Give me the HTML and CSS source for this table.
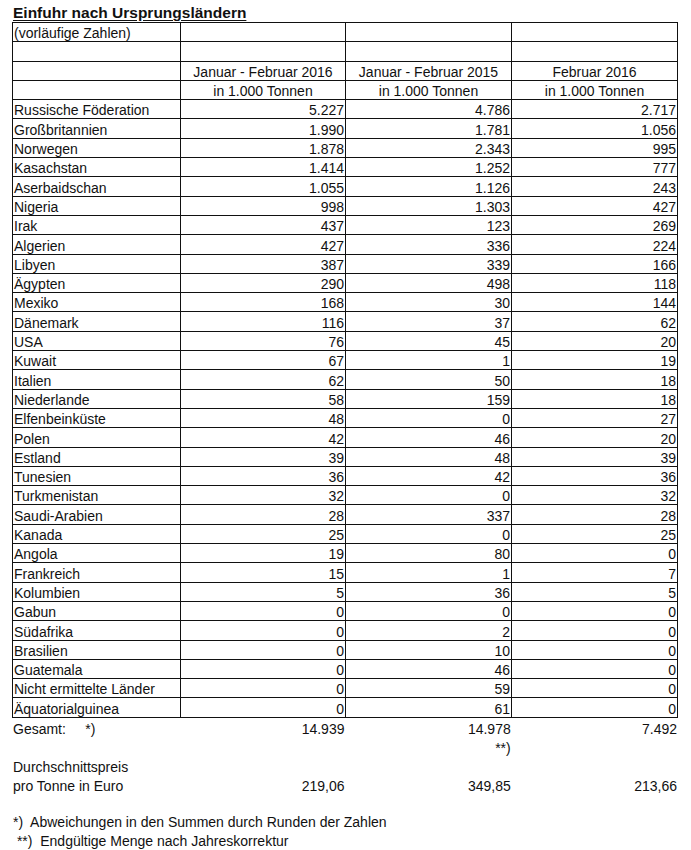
FILE: index.html
```html
<!DOCTYPE html>
<html lang="de">
<head>
    <meta charset="UTF-8">
    <title>Einfuhr nach Ursprungsländern</title>
    <link rel="stylesheet" href="styles.css">
</head>
<body>

<div class="sheet">
    <h1 class="title">Einfuhr nach Ursprungsländern</h1>

    <table class="grid">
        <colgroup>
            <col class="col-name">
            <col class="col-a">
            <col class="col-b">
            <col class="col-c">
        </colgroup>
        <tbody>
            <tr><td>(vorläufige Zahlen)</td><td></td><td></td><td></td></tr>
            <tr><td></td><td></td><td></td><td></td></tr>
            <tr class="head"><td></td><td>Januar - Februar 2016</td><td>Januar - Februar 2015</td><td>Februar 2016</td></tr>
            <tr class="head"><td></td><td>in 1.000 Tonnen</td><td>in 1.000 Tonnen</td><td>in 1.000 Tonnen</td></tr>
            <tr><td>Russische Föderation</td><td>5.227</td><td>4.786</td><td>2.717</td></tr>
            <tr><td>Großbritannien</td><td>1.990</td><td>1.781</td><td>1.056</td></tr>
            <tr><td>Norwegen</td><td>1.878</td><td>2.343</td><td>995</td></tr>
            <tr><td>Kasachstan</td><td>1.414</td><td>1.252</td><td>777</td></tr>
            <tr><td>Aserbaidschan</td><td>1.055</td><td>1.126</td><td>243</td></tr>
            <tr><td>Nigeria</td><td>998</td><td>1.303</td><td>427</td></tr>
            <tr><td>Irak</td><td>437</td><td>123</td><td>269</td></tr>
            <tr><td>Algerien</td><td>427</td><td>336</td><td>224</td></tr>
            <tr><td>Libyen</td><td>387</td><td>339</td><td>166</td></tr>
            <tr><td>Ägypten</td><td>290</td><td>498</td><td>118</td></tr>
            <tr><td>Mexiko</td><td>168</td><td>30</td><td>144</td></tr>
            <tr><td>Dänemark</td><td>116</td><td>37</td><td>62</td></tr>
            <tr><td>USA</td><td>76</td><td>45</td><td>20</td></tr>
            <tr><td>Kuwait</td><td>67</td><td>1</td><td>19</td></tr>
            <tr><td>Italien</td><td>62</td><td>50</td><td>18</td></tr>
            <tr><td>Niederlande</td><td>58</td><td>159</td><td>18</td></tr>
            <tr><td>Elfenbeinküste</td><td>48</td><td>0</td><td>27</td></tr>
            <tr><td>Polen</td><td>42</td><td>46</td><td>20</td></tr>
            <tr><td>Estland</td><td>39</td><td>48</td><td>39</td></tr>
            <tr><td>Tunesien</td><td>36</td><td>42</td><td>36</td></tr>
            <tr><td>Turkmenistan</td><td>32</td><td>0</td><td>32</td></tr>
            <tr><td>Saudi-Arabien</td><td>28</td><td>337</td><td>28</td></tr>
            <tr><td>Kanada</td><td>25</td><td>0</td><td>25</td></tr>
            <tr><td>Angola</td><td>19</td><td>80</td><td>0</td></tr>
            <tr><td>Frankreich</td><td>15</td><td>1</td><td>7</td></tr>
            <tr><td>Kolumbien</td><td>5</td><td>36</td><td>5</td></tr>
            <tr><td>Gabun</td><td>0</td><td>0</td><td>0</td></tr>
            <tr><td>Südafrika</td><td>0</td><td>2</td><td>0</td></tr>
            <tr><td>Brasilien</td><td>0</td><td>10</td><td>0</td></tr>
            <tr><td>Guatemala</td><td>0</td><td>46</td><td>0</td></tr>
            <tr><td>Nicht ermittelte Länder</td><td>0</td><td>59</td><td>0</td></tr>
            <tr><td>Äquatorialguinea</td><td>0</td><td>61</td><td>0</td></tr>
        </tbody>
    </table>

    <table class="totals">
        <colgroup>
            <col class="col-name">
            <col class="col-a">
            <col class="col-b">
            <col class="col-c">
        </colgroup>
        <tbody>
            <tr><td>Gesamt:&nbsp;&nbsp;&nbsp;&nbsp;&nbsp;*)</td><td>14.939</td><td>14.978</td><td>7.492</td></tr>
            <tr><td></td><td></td><td>**)</td><td></td></tr>
            <tr><td>Durchschnittspreis</td><td></td><td></td><td></td></tr>
            <tr><td>pro Tonne in Euro</td><td>219,06</td><td>349,85</td><td>213,66</td></tr>
        </tbody>
    </table>

    <!-- Fussnoten -->
    <div class="notes">
        <p class="note">*)  Abweichungen in den Summen durch Runden der Zahlen</p>
        <p class="note"> **)  Endgültige Menge nach Jahreskorrektur</p>
    </div>
</div>

</body>
</html>
```
FILE: styles.css
```css
/* General styling */
body {
    margin: 0;
    background: #ffffff;
    color: #111111;
    font-family: "Liberation Sans", Arial, sans-serif;
    font-size: 14px;
}

.sheet {
    padding-left: 12px;
    width: 666px;
}

/* Heading */
.title {
    margin: 0;
    padding: 4px 0 0 1px;
    font-size: 15.5px;
    font-weight: bold;
    line-height: 18px;
    text-decoration: underline;
    text-underline-offset: 2px;
}

/* Shared column widths */
table {
    border-collapse: collapse;
    table-layout: fixed;
    width: 666px;
}

.col-name { width: 168px; }
.col-a { width: 165px; }
.col-b { width: 166px; }
.col-c { width: 166px; }

td {
    padding: 0 1px 0 1px;
    line-height: 15px;
    vertical-align: bottom;
    white-space: nowrap;
    text-align: right;
}

td:first-child {
    text-align: left;
}

/* Main grid */
.grid tr {
    height: 19.3px;
}

.grid td {
    border: 1px solid #111111;
}

.grid .head td {
    text-align: center;
}

/* Totals below the grid */
.totals tr {
    height: 19.1px;
}

/* Footnotes */
.notes {
    padding: 19px 0 0 1px;
}

.note {
    margin: 0;
    height: 18.5px;
    line-height: 18px;
    white-space: pre;
}
```
